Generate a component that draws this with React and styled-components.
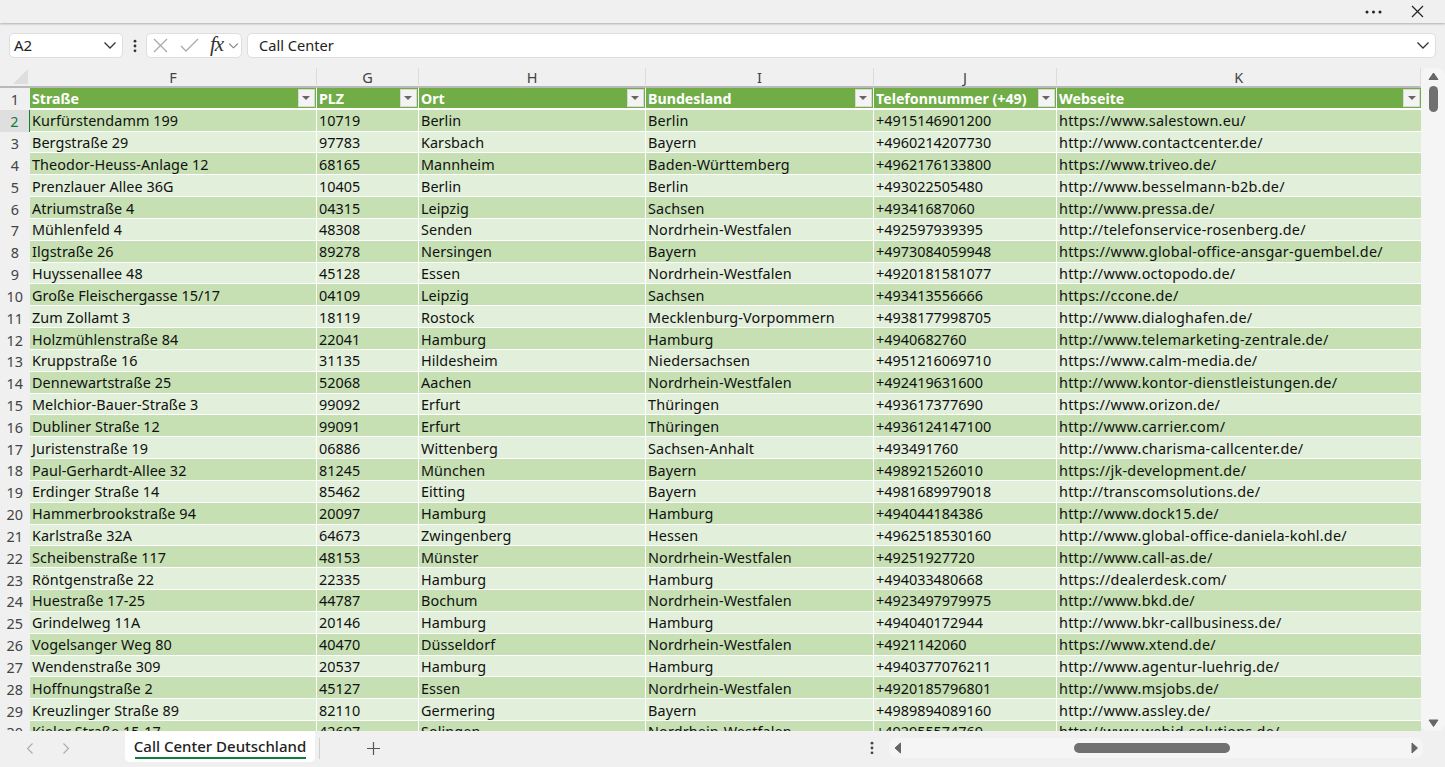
import React from 'react';
import styled, { createGlobalStyle } from 'styled-components';

const Global = createGlobalStyle`
  html, body { margin: 0; padding: 0; height: 100%; overflow: hidden; background: #f0f0f0; }
  #root { height: 100%; }
`;

const Page = styled.div`
  width: 1445px; height: 767px; display: flex; flex-direction: column; overflow: hidden;
  background: #f0f0f0; font-family: "Noto Sans", "Open Sans", sans-serif; color: #212121;
`;
const TitleBar = styled.div`
  height: 23px; flex: none; display: flex; align-items: center; justify-content: flex-end;
  gap: 28px; padding-right: 21px; background: #f0f0f0; box-shadow: 0 1px 2px rgba(0,0,0,.28);
  position: relative;
`;
const IconBtn = styled.span`
  display: inline-flex; align-items: center; justify-content: center; color: ${p => p.$c || '#222'};
`;
const FormulaBar = styled.div`
  height: 25px; flex: none; margin-top: 10px; padding: 0 9px; display: flex; align-items: center;
`;
const Field = styled.div`
  height: 25px; box-sizing: border-box; background: #fff; border: 1px solid #dedede; border-radius: 5px;
  display: flex; align-items: center; font-size: 14.6px; color: #222; padding-bottom: 1px;
`;
const NameBox = styled(Field)`
  width: 114px; padding: 0 5px 1px 4px; justify-content: space-between; font-size: 15px;
`;
const Dots = styled.div`
  width: 23px; display: flex; justify-content: center;
`;
const FxBox = styled(Field)`
  width: 96px; padding: 0 2px 1px 6px; justify-content: space-between;
`;
const FxText = styled.span`
  font-family: "Liberation Serif", serif; font-style: italic; font-size: 21px; color: #333; margin: -3px 2px 0 8px;
  letter-spacing: -1px; font-weight: 500; line-height: 22px;
`;
const FormulaInput = styled(Field)`
  flex: 1; margin-left: 5px; padding: 0 5px 1px 11px; justify-content: space-between; width: auto;
`;
const SheetArea = styled.div`
  margin-top: 10px; flex: 1; min-height: 0; display: flex; overflow: hidden;
`;
const GridWrap = styled.div`
  width: 1421px; flex: none; overflow: hidden; background: #fff;
`;
const Grid = styled.div`
  display: grid;
  grid-template-columns: 29.5px 287px 102px 227px 228px 183px 364.5px;
  grid-template-rows: 20px repeat(30, 21.83px);
`;
const Corner = styled.div`
  background: #f0f0f0; position: relative; border-bottom: 2px solid #b9b9b9; box-sizing: border-box;
  &::after {
    content: ""; position: absolute; right: 2px; bottom: 2px; width: 0; height: 0;
    border-left: 15px solid transparent; border-bottom: 15px solid #dedede;
  }
`;
const ColHead = styled.div`
  background: #f0f0f0; box-sizing: border-box; border-right: 1px solid #dcdcdc; border-bottom: 2px solid #b9b9b9;
  display: flex; align-items: center; justify-content: center; font-size: 14.5px; color: #444;
  padding-left: 1px; padding-bottom: 1px;
`;
const RowHead = styled.div`
  background: ${p => p.$active ? '#dfdfdf' : '#f0f0f0'}; box-sizing: border-box;
  border-right: ${p => p.$active ? '1.5px solid #107c41' : '0'};
  display: flex; align-items: center; justify-content: center; padding-top: 2px;
  font-size: 14.4px; color: ${p => p.$active ? '#107c41' : '#444'};
`;
const Cell = styled.div`
  box-sizing: border-box; background: ${p => p.$odd ? '#c6e0b4' : '#e2efda'};
  border-right: 1px solid #fff; border-bottom: 1px solid #fff;
  padding: 2px 0 0 2.5px; font-size: 14.4px; line-height: 20px; color: #111; white-space: nowrap; overflow: hidden;
  display: flex; align-items: center; letter-spacing: ${p => p.$track || 0}px;
  &:nth-child(7n) { border-right: 0; }
`;
const HeadCell = styled(Cell)`
  background: #70ad47; color: #fff; font-weight: 700; font-size: 14.2px; border-bottom: 2px solid #fff;
  justify-content: space-between; padding: 2px 1px 0 2.5px;
`;
const Filter = styled.span`
  width: 17px; height: 18px; flex: none; box-sizing: border-box; background: #f3f3f3; border: 1px solid #d8d8d8;
  display: inline-flex; align-items: center; justify-content: center; margin-top: -2px;
  &::after { content: ""; width: 0; height: 0; border-left: 4px solid transparent; border-right: 4px solid transparent; border-top: 4px solid #666; }
`;
const VScroll = styled.div`
  flex: 1; display: flex; flex-direction: column; align-items: center; background: #f5f5f5; border-radius: 8px;
  padding: 4px 0 4px; box-sizing: border-box;
`;
const VThumb = styled.div`
  width: 9px; height: 26px; border-radius: 5px; background: #707070; margin-top: 6px;
`;
const Spacer = styled.div`
  flex: 1;
`;
const BottomBar = styled.div`
  height: 36px; flex: none; display: flex; align-items: flex-start; background: #f0f0f0;
`;
const NavArrows = styled.div`
  width: 125px; height: 34px; box-sizing: border-box; padding-left: 26px; display: flex; align-items: center; gap: 28px; flex: none;
`;
const Tab = styled.div`
  width: 190px; height: 31px; box-sizing: border-box; padding: 4px 9.5px 0; flex: none; background: #fff;
  border-radius: 0 0 5px 5px; display: flex; flex-direction: column; align-items: center; font-size: 15px; line-height: 22px;
  font-weight: 500; color: #222; white-space: nowrap;
`;
const TabLine = styled.div`
  width: 100%; height: 2px; background: #107c41; margin-top: 0;
`;
const TabSep = styled.div`
  width: 1px; height: 21px; background: #cfcfcf; margin: 7px 0 0 4px; flex: none;
`;
const AddTab = styled.div`
  width: 106px; height: 34px; display: flex; align-items: center; justify-content: center; flex: none;
`;
const Grow = styled.div`
  flex: 1;
`;
const MoreTabs = styled.div`
  width: 19px; height: 34px; display: flex; align-items: center; justify-content: center; flex: none;
`;
const HScroll = styled.div`
  width: 534px; height: 20px; margin: 7px 22px 0 8px; background: #f5f5f5; border-radius: 8px; flex: none;
  display: flex; align-items: center; box-sizing: border-box; padding: 0 4px 0 5px;
`;
const HThumb = styled.div`
  width: 156px; height: 10px; border-radius: 5px; background: #707070; margin-left: 172px;
`;

const Chevron = () => (
  <svg width="14" height="14" viewBox="0 0 14 14" fill="none" stroke="#333" strokeWidth="1.3"><path d="M1.5 4.5 7 10l5.5-5.5" /></svg>
);
const VDots = ({ c = '#444' }) => (
  <svg width="4" height="14" viewBox="0 0 4 14" fill={c}><circle cx="2" cy="2.2" r="1.4" /><circle cx="2" cy="7" r="1.4" /><circle cx="2" cy="11.8" r="1.4" /></svg>
);
const Tri = ({ d }) => {
  const paths = { up: 'M1 7.500 5.500 1 10 7.500Z', down: 'M1 1h9L5.500 7.500Z', left: 'M6.500 1v10L1 6Z', right: 'M1 1v10l5.500-5Z' };
  const horiz = d === 'left' || d === 'right';
  return (
    <svg width={horiz ? 8 : 11} height={horiz ? 12 : 8} viewBox={horiz ? '0 0 8 12' : '0 0 11 8'} fill="#666" stroke="#666" strokeLinejoin="round">
      <path d={paths[d]} />
    </svg>
  );
};

const cols = ['F', 'G', 'H', 'I', 'J', 'K'];
const tracks = [0.07, 0, 0.07, 0.13, 0, 0.25];
const header = ['Straße', 'PLZ', 'Ort', 'Bundesland', 'Telefonnummer (+49)', 'Webseite'];
const NRW = 'Nordrhein-Westfalen';
const rows = [
  ['Kurfürstendamm 199', '10719', 'Berlin', 'Berlin', '+4915146901200', 'https://www.salestown.eu/'],
  ['Bergstraße 29', '97783', 'Karsbach', 'Bayern', '+4960214207730', 'http://www.contactcenter.de/'],
  ['Theodor-Heuss-Anlage 12', '68165', 'Mannheim', 'Baden-Württemberg', '+4962176133800', 'https://www.triveo.de/'],
  ['Prenzlauer Allee 36G', '10405', 'Berlin', 'Berlin', '+493022505480', 'http://www.besselmann-b2b.de/'],
  ['Atriumstraße 4', '04315', 'Leipzig', 'Sachsen', '+49341687060', 'http://www.pressa.de/'],
  ['Mühlenfeld 4', '48308', 'Senden', NRW, '+492597939395', 'http://telefonservice-rosenberg.de/'],
  ['Ilgstraße 26', '89278', 'Nersingen', 'Bayern', '+4973084059948', 'https://www.global-office-ansgar-guembel.de/'],
  ['Huyssenallee 48', '45128', 'Essen', NRW, '+4920181581077', 'http://www.octopodo.de/'],
  ['Große Fleischergasse 15/17', '04109', 'Leipzig', 'Sachsen', '+493413556666', 'https://ccone.de/'],
  ['Zum Zollamt 3', '18119', 'Rostock', 'Mecklenburg-Vorpommern', '+4938177998705', 'http://www.dialoghafen.de/'],
  ['Holzmühlenstraße 84', '22041', 'Hamburg', 'Hamburg', '+4940682760', 'http://www.telemarketing-zentrale.de/'],
  ['Kruppstraße 16', '31135', 'Hildesheim', 'Niedersachsen', '+4951216069710', 'https://www.calm-media.de/'],
  ['Dennewartstraße 25', '52068', 'Aachen', NRW, '+492419631600', 'http://www.kontor-dienstleistungen.de/'],
  ['Melchior-Bauer-Straße 3', '99092', 'Erfurt', 'Thüringen', '+493617377690', 'https://www.orizon.de/'],
  ['Dubliner Straße 12', '99091', 'Erfurt', 'Thüringen', '+4936124147100', 'http://www.carrier.com/'],
  ['Juristenstraße 19', '06886', 'Wittenberg', 'Sachsen-Anhalt', '+493491760', 'http://www.charisma-callcenter.de/'],
  ['Paul-Gerhardt-Allee 32', '81245', 'München', 'Bayern', '+498921526010', 'https://jk-development.de/'],
  ['Erdinger Straße 14', '85462', 'Eitting', 'Bayern', '+4981689979018', 'http://transcomsolutions.de/'],
  ['Hammerbrookstraße 94', '20097', 'Hamburg', 'Hamburg', '+494044184386', 'http://www.dock15.de/'],
  ['Karlstraße 32A', '64673', 'Zwingenberg', 'Hessen', '+4962518530160', 'http://www.global-office-daniela-kohl.de/'],
  ['Scheibenstraße 117', '48153', 'Münster', NRW, '+49251927720', 'http://www.call-as.de/'],
  ['Röntgenstraße 22', '22335', 'Hamburg', 'Hamburg', '+494033480668', 'https://dealerdesk.com/'],
  ['Huestraße 17-25', '44787', 'Bochum', NRW, '+4923497979975', 'http://www.bkd.de/'],
  ['Grindelweg 11A', '20146', 'Hamburg', 'Hamburg', '+494040172944', 'http://www.bkr-callbusiness.de/'],
  ['Vogelsanger Weg 80', '40470', 'Düsseldorf', NRW, '+4921142060', 'https://www.xtend.de/'],
  ['Wendenstraße 309', '20537', 'Hamburg', 'Hamburg', '+4940377076211', 'http://www.agentur-luehrig.de/'],
  ['Hoffnungstraße 2', '45127', 'Essen', NRW, '+4920185796801', 'http://www.msjobs.de/'],
  ['Kreuzlinger Straße 89', '82110', 'Germering', 'Bayern', '+4989894089160', 'http://www.assley.de/'],
  ['Kieler Straße 15-17', '42697', 'Solingen', NRW, '+492955574769', 'http://www.webid-solutions.de/'],
];

export default function App() {
  return (
    <Page>
      <Global />
      <TitleBar>
        <IconBtn>
          <svg width="18" height="4" viewBox="0 0 18 4" fill="#222"><circle cx="2" cy="2" r="1.5" /><circle cx="8.500" cy="2" r="1.5" /><circle cx="15" cy="2" r="1.5" /></svg>
        </IconBtn>
        <IconBtn>
          <svg width="13" height="13" viewBox="0 0 13 13" stroke="#222" strokeWidth="1.2" fill="none"><path d="M1 1l11 11M12 1 1 12" /></svg>
        </IconBtn>
      </TitleBar>
      <FormulaBar>
        <NameBox>A2<Chevron /></NameBox>
        <Dots><VDots c="#333" /></Dots>
        <FxBox>
          <svg width="15" height="15" viewBox="0 0 15 15" stroke="#aaa" strokeWidth="1.3" fill="none"><path d="M1 1l13 13M14 1 1 14" /></svg>
          <svg width="19" height="14" viewBox="0 0 19 14" stroke="#aaa" strokeWidth="1.3" fill="none" style={{ marginLeft: 9 }}><path d="M1 8l5 5L18 1" /></svg>
          <FxText>fx</FxText>
          <svg width="11" height="11" viewBox="0 0 14 14" fill="none" stroke="#777" strokeWidth="1.3"><path d="M1.500 4.500 7 10l5.500-5.500" /></svg>
        </FxBox>
        <FormulaInput>Call Center<Chevron /></FormulaInput>
      </FormulaBar>
      <SheetArea>
        <GridWrap>
          <Grid>
            <Corner />
            {cols.map(c => <ColHead key={c}>{c}</ColHead>)}
            <RowHead>1</RowHead>
            {header.map(h => <HeadCell key={h}>{h}<Filter /></HeadCell>)}
            {rows.map((r, i) => (
              <React.Fragment key={i}>
                <RowHead $active={i === 0}>{i + 2}</RowHead>
                {r.map((v, j) => <Cell key={j} $odd={i % 2 === 0} $track={tracks[j]}>{v}</Cell>)}
              </React.Fragment>
            ))}
          </Grid>
        </GridWrap>
        <VScroll>
          <Tri d="up" />
          <VThumb />
          <Spacer />
          <Tri d="down" />
        </VScroll>
      </SheetArea>
      <BottomBar>
        <NavArrows>
          <svg width="8" height="11" viewBox="0 0 8 11" fill="none" stroke="#aaa" strokeWidth="1.1"><path d="M6.500 .5 1.500 5.500l5 5" /></svg>
          <svg width="8" height="11" viewBox="0 0 8 11" fill="none" stroke="#aaa" strokeWidth="1.1"><path d="M1.500 .5l5 5-5 5" /></svg>
        </NavArrows>
        <Tab>Call Center Deutschland<TabLine /></Tab>
        <TabSep />
        <AddTab>
          <svg width="13" height="13" viewBox="0 0 13 13" stroke="#555" strokeWidth="1.2"><path d="M6.500 0v13M0 6.500h13" /></svg>
        </AddTab>
        <Grow />
        <MoreTabs><VDots /></MoreTabs>
        <HScroll>
          <Tri d="left" />
          <HThumb />
          <Grow />
          <Tri d="right" />
        </HScroll>
      </BottomBar>
    </Page>
  );
}
